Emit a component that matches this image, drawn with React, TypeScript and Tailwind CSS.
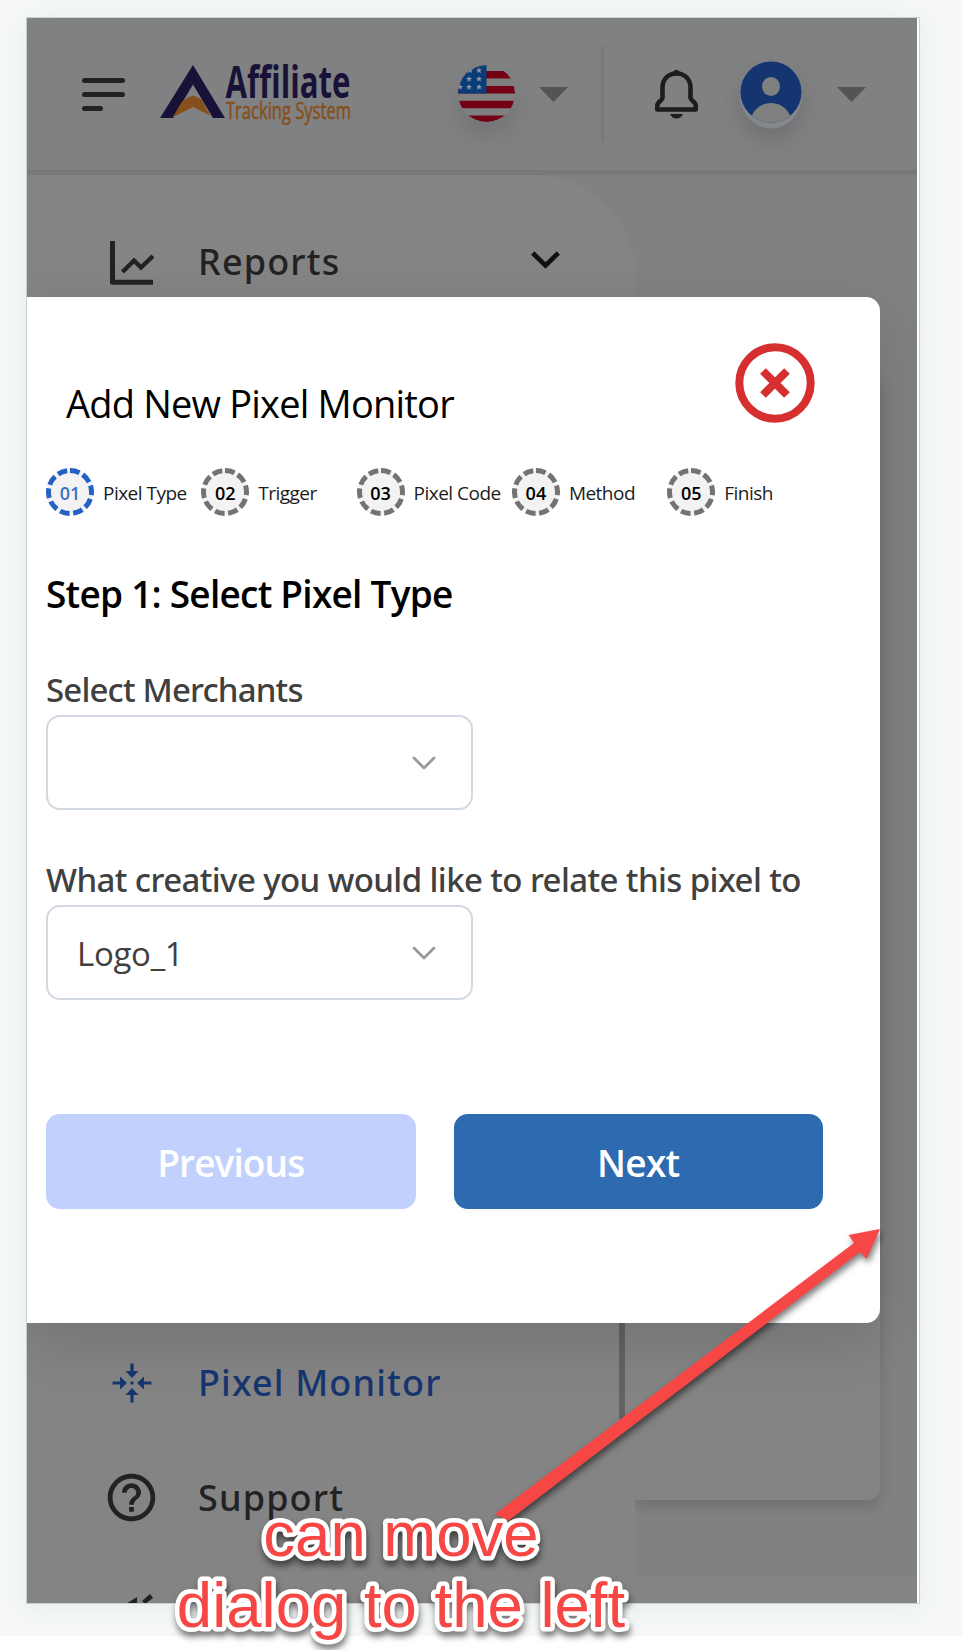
import type { ReactNode } from "react";
import { MdHelpOutline } from "react-icons/md";

const STEPS = ["Pixel Type", "Trigger", "Pixel Code", "Method", "Finish"];

function Caret() {
  return (
    <svg width="29" height="15" viewBox="0 0 29 15" className="shrink-0">
      <path d="M0 0H29L14.500 15Z" fill="#545456" />
    </svg>
  );
}

function Logo() {
  return (
    <svg width="192" height="62" viewBox="0 0 192 62" className="shrink-0 overflow-visible">
      <path d="M33 2L65 55H53L33 21.500L13 55H0Z" fill="#191238" />
      <path d="M33 32.500Q38 34 42 37L50 52.500L33 44L12.500 54.500L22 38.500Q28 34 33 32.500Z" fill="#86501c" />
      <text x="65.500" y="34.500" fontSize="45" fontWeight="700" fill="#191238" textLength="125" lengthAdjust="spacingAndGlyphs" fontFamily="'Open Sans'">
        Affiliate
      </text>
      <text x="66" y="56" fontSize="24" fill="#86501c" stroke="#86501c" strokeWidth="0.600" textLength="125" lengthAdjust="spacingAndGlyphs" fontFamily="'Open Sans'">
        Tracking System
      </text>
    </svg>
  );
}

const STAR = "M0-3.200L.8-1H3.100L1.300.4L2 2.700L0 1.300L-2 2.700L-1.300.4L-3.100-1H-.8Z";

function Flag() {
  const stars = [
    [2, 22], [11, 22], [21, 22],
    [11, 14], [21, 14],
    [12, 5.5], [21, 5.5],
  ];
  return (
    <svg width="57" height="57" viewBox="0 0 57 57" className="mb-[1px] shrink-0 rounded-full shadow-[0_14px_22px_rgba(0,0,0,0.10)]">
      <defs>
        <clipPath id="flagClip">
          <circle cx="28.500" cy="28.500" r="28.500" />
        </clipPath>
      </defs>
      <g clipPath="url(#flagClip)">
        <rect width="57" height="57" fill="#808080" />
        <path d="M0 6H57V13.500H0ZM0 21H57V28.500H0ZM0 35.800H57V43.300H0ZM0 50.500H57V57H0Z" fill="#730014" />
        <rect width="28.500" height="28.500" fill="#0a3c77" />
        {stars.map(([x, y]) => (
          <path key={`${x}-${y}`} d={STAR} transform={`translate(${x} ${y})`} fill="#8e97a5" />
        ))}
      </g>
    </svg>
  );
}

function Bell() {
  return (
    <svg width="43" height="50" viewBox="0 0 43 50" fill="none" className="shrink-0">
      <path d="M21.500 4.500C13 4.500 7.500 10.500 7.500 18.500V29C7.500 31.500 2.300 33 2.300 36.500V40.500H40.700V36.500C40.700 33 35.500 31.500 35.500 29V18.500C35.500 10.500 30 4.500 21.500 4.500Z" stroke="#1d1d1f" strokeWidth="4.600" strokeLinejoin="round" />
      <path d="M17.500 3.500Q21.500-2 25.500 3.500Z" fill="#1d1d1f" />
      <path d="M15 45H28Q26 49.500 21.500 49.500T15 45Z" fill="#1d1d1f" />
    </svg>
  );
}

function Avatar() {
  return (
    <svg width="64" height="72" viewBox="0 0 64 72" className="shrink-0 drop-shadow-[0_12px_10px_rgba(0,0,0,0.12)]">
      <defs>
        <clipPath id="avatarClip">
          <circle cx="32" cy="34" r="30.500" />
        </clipPath>
      </defs>
      <ellipse cx="32" cy="37" rx="31" ry="33.500" fill="#85878d" />
      <circle cx="32" cy="34" r="31" fill="#7a8094" />
      <circle cx="32" cy="34" r="30.500" fill="#153570" />
      <g clipPath="url(#avatarClip)" fill="#808080">
        <ellipse cx="32" cy="28.500" rx="9" ry="9.500" />
        <circle cx="32" cy="66" r="21" />
      </g>
    </svg>
  );
}

function ReportsIcon() {
  return (
    <svg width="44" height="44" viewBox="0 0 44 44" fill="none" stroke="#222" className="mt-[2px] shrink-0">
      <path d="M2.500 0V41.300H43" strokeWidth="5" strokeLinejoin="round" />
      <path d="M12.500 31L24 19.500L31 26.500L43 15" strokeWidth="4.400" />
    </svg>
  );
}

function PixelIcon() {
  return (
    <svg width="40" height="40" viewBox="-20 -20 40 40" fill="#17356f" className="mt-px shrink-0">
      {[0, 90, 180, 270].map((a) => (
        <path key={a} transform={`rotate(${a})`} d="M-1.600-19.500H1.600V-12H6.500L0-5L-6.500-12H-1.600Z" />
      ))}
      <circle r="1.700" />
    </svg>
  );
}

function NavRow({ icon, label, active, trailing }: { icon: ReactNode; label: string; active?: boolean; trailing?: ReactNode }) {
  return (
    <div className="flex h-[115px] shrink-0 items-center">
      <div className="ml-[76px] flex w-[57px] shrink-0 justify-center">{icon}</div>
      <span
        className={
          "ml-[38px] whitespace-nowrap font-['Noto_Sans',sans-serif] text-[36px] font-medium leading-[48px] tracking-[1.15px] " +
          (active ? "text-[#17356f]" : "text-[#222222]")
        }
      >
        {label}
      </span>
      {trailing}
    </div>
  );
}

function Step({ index, label }: { index: number; label: string }) {
  const active = index === 0;
  return (
    <div className="flex w-[155.300px] shrink-0 items-center">
      <div className="relative flex size-12 items-center justify-center">
        <svg width="48" height="48" viewBox="0 0 48 48" className="absolute inset-0">
          <circle cx="24" cy="24" r="23.500" fill="#f3f3f3" />
          <circle
            cx="24"
            cy="24"
            r="21.500"
            fill="none"
            stroke={active ? "#2560c3" : "#737373"}
            strokeWidth="5"
            strokeDasharray="9.800 3.709"
            transform="rotate(-90 24 24)"
          />
        </svg>
        <span className={"relative pt-[2px] text-[18px] font-semibold leading-6 " + (active ? "text-[#3a70cc]" : "text-black")}>
          0{index + 1}
        </span>
      </div>
      <span className="ml-[9px] whitespace-nowrap pt-[2px] text-[19px] leading-6 tracking-[-0.52px] text-[#1c1c1c]">{label}</span>
    </div>
  );
}

function Select({ value }: { value?: string }) {
  return (
    <div className="mt-1 flex h-[95px] w-[427px] items-center justify-between rounded-[14px] border-2 border-[#d3d9e3] bg-white pl-[29px] pr-[35px]">
      <span className="pt-[3px] text-[33px] leading-[44px] tracking-[-0.3px] text-[#404040]">{value}</span>
      <svg width="24" height="14" viewBox="0 0 24 14" fill="none" stroke="#999" strokeWidth="2.800" strokeLinecap="round" strokeLinejoin="round">
        <path d="M2 2L12 12L22 2" />
      </svg>
    </div>
  );
}

function Dialog() {
  return (
    <div className="absolute left-0 top-[279px] z-20 h-[1026px] w-[853px] rounded-r-[14px] bg-white pl-[19px] shadow-[0_20px_55px_rgba(0,0,0,0.13)]">
      <div className="flex h-[171px] items-start justify-between pl-[20px] pr-[65px]">
        <h2 className="mt-[82px] whitespace-nowrap text-[38px] leading-[48px] tracking-[-0.8px] text-black">Add New Pixel Monitor</h2>
        <svg width="80" height="80" viewBox="0 0 80 80" fill="none" stroke="#d5302f" strokeWidth="8" className="mt-[46px]">
          <circle cx="40" cy="40" r="35.700" />
          <path d="M28 28L52 52M52 28L28 52" />
        </svg>
      </div>
      <div className="flex">
        {STEPS.map((s, i) => (
          <Step key={s} index={i} label={s} />
        ))}
      </div>
      <h3 className="mt-[54px] whitespace-nowrap text-[37px] font-semibold leading-[48px] tracking-[-0.76px] text-black">Step 1: Select Pixel Type</h3>
      <div className="mt-[50px] whitespace-nowrap font-['Noto_Sans',sans-serif] text-[33px] font-medium leading-[44px] tracking-[-0.84px] text-[#404040]">
        Select Merchants
      </div>
      <div className="-mt-px">
        <Select />
      </div>
      <div className="mt-[48px] whitespace-nowrap font-['Noto_Sans',sans-serif] text-[33px] font-medium leading-[44px] tracking-[-0.6px] text-[#404040]">
        What creative you would like to relate this pixel to
      </div>
      <div className="-mt-px">
        <Select value="Logo_1" />
      </div>
      <div className="mt-[114px] flex gap-[38px]">
        <button className="h-[95px] w-[369.500px] rounded-[14px] bg-[#c1d0fd] pt-[3px] text-[37px] font-semibold tracking-[-0.9px] text-white">Previous</button>
        <button className="h-[95px] w-[369.500px] rounded-[14px] bg-[#2d6ab0] pt-[3px] text-[37px] font-semibold tracking-[-0.7px] text-white">Next</button>
      </div>
    </div>
  );
}

export default function App() {
  return (
    <div className="relative h-[1650px] w-[962px] overflow-hidden bg-white font-['Open_Sans',sans-serif]">
      <div className="h-[1636px] overflow-hidden bg-[#f5f8f7] pl-[27px] pt-[18px]">
        <div className="h-[1585px] w-[892px] border-r-2 border-white bg-[#808183] shadow-[0_0_0_1px_#cdd0d1,0_4px_26px_rgba(70,80,110,0.08)]">
          <div className="relative h-full w-[890px] overflow-hidden">
            <header className="flex h-[157px] items-center border-b-[5px] border-[#78797b]">
              <div className="ml-[55px] flex w-[43px] flex-col gap-[9px]">
                <div className="h-[5px] rounded-full bg-[#222]" />
                <div className="h-[5px] rounded-full bg-[#222]" />
                <div className="h-[5px] w-[21px] rounded-full bg-[#222]" />
              </div>
              <div className="ml-[35px]">
                <Logo />
              </div>
              <div className="ml-[106px]">
                <Flag />
              </div>
              <div className="ml-[24px]">
                <Caret />
              </div>
              <div className="ml-[33px] h-[96px] w-[3px] bg-[#78797b]" />
              <div className="ml-[51px]">
                <Bell />
              </div>
              <div className="ml-[41px]">
                <Avatar />
              </div>
              <div className="ml-[34px]">
                <Caret />
              </div>
            </header>
            <div className="flex h-[1401px]">
              <aside className="relative z-10 h-[1428px] w-[608px] shrink-0 rounded-tr-[100px] bg-[#848484]">
                <div className="flex h-full">
                  <nav className="flex w-[592px] shrink-0 flex-col pt-[29px]">
                    <NavRow
                      icon={<ReportsIcon />}
                      label="Reports"
                      trailing={
                        <svg width="29" height="18" viewBox="0 0 29 18" fill="none" stroke="#111" strokeWidth="4.600" className="mb-1 ml-auto mr-[59px]">
                          <path d="M1.700 2L14.500 14.500L27.300 2" />
                        </svg>
                      }
                    />
                    <div className="h-[1006px] shrink-0" />
                    <NavRow icon={<PixelIcon />} label="Pixel Monitor" active />
                    <NavRow icon={<MdHelpOutline size={57} color="#222" className="shrink-0" />} label="Support" />
                    <svg width="40" height="12" viewBox="0 0 40 12" fill="#222" className="ml-[96px] mt-[38px] shrink-0">
                      <path d="M1 12L14 4V12Z" />
                      <path d="M19 8L27 1L30 5L22 11Z" />
                    </svg>
                  </nav>
                  <div className="mt-[1044px] h-[200px] w-[6px] bg-[#626262]" />
                </div>
              </aside>
              <main className="min-w-0 flex-1 bg-[#808183]">
                <div className="h-[1325px] w-[245px] pt-[200px]">
                  <div className="h-full rounded-br-[12px] bg-[#848484] shadow-[0_6px_14px_rgba(0,0,0,0.14)]" />
                </div>
              </main>
            </div>
            <footer className="h-[27px] bg-[#848484]" />
            <Dialog />
          </div>
        </div>
      </div>
      <svg width="962" height="1650" viewBox="0 0 962 1650" className="pointer-events-none absolute inset-0 z-20">
        <path d="M880 1229L866.500 1259L860 1252L508 1521L495 1514L854 1243L848.500 1235Z" fill="#f64744" className="drop-shadow-[2px_4px_3px_rgba(0,0,0,0.5)]" />
        <g
          fontFamily="'Liberation Sans', Arial, sans-serif"
          fontSize="63.500"
          fill="#f64744"
          stroke="#fff"
          strokeWidth="9"
          strokeLinejoin="round"
          textAnchor="middle"
          className="drop-shadow-[1px_5px_3px_rgba(0,0,0,0.5)] [paint-order:stroke_fill]"
        >
          <text x="401" y="1556">can move</text>
          <text x="401" y="1627">dialog to the left</text>
        </g>
      </svg>
    </div>
  );
}
